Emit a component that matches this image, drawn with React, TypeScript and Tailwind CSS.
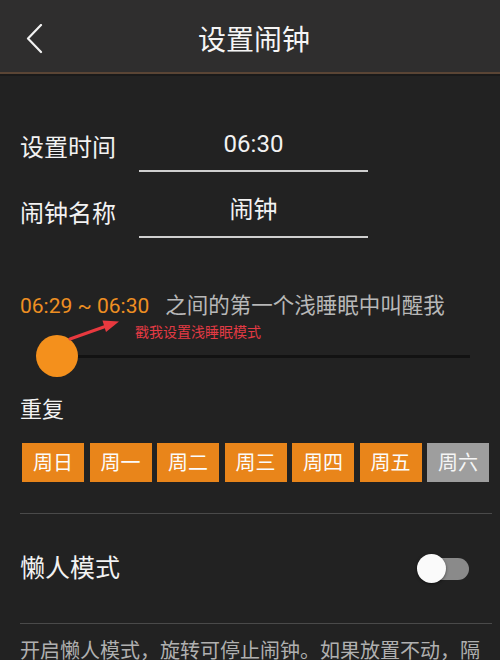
import React from "react";

const days = ["周日", "周一", "周二", "周三", "周四", "周五", "周六"];

export default function App() {
  return (
    <div
      className="relative w-[500px] h-[660px] overflow-hidden bg-[#222222] text-white"
      style={{ fontFamily: "Roboto, 'Noto Sans CJK SC', 'Noto Sans', sans-serif" }}
    >
      {/* Header */}
      <div className="relative h-[72px] bg-[#2f2e2e] flex items-center justify-center">
        <div className="absolute left-[26px] top-[24px]">
          <svg width="18" height="30" viewBox="0 0 18 30" fill="none">
            <polyline points="15,1 2,14.5 15,28" stroke="#f2f2f2" strokeWidth="2.2" strokeLinecap="round" strokeLinejoin="round" />
          </svg>
        </div>
        <div className="text-[28px] leading-[36px] mt-[10px] ml-[8px] text-[#f5f5f5]">设置闹钟</div>
      </div>
      <div className="h-[2px] bg-[#5a4535]" />
      <div className="h-[2px] bg-[#1a1a1a]" />

      {/* Body */}
      <div className="pl-[20px]">
        <div className="pt-[52px] flex items-end">
          <div className="w-[119px] text-[24px] leading-[32px] mb-[8px] text-[#f2f2f2]">设置时间</div>
          <div className="w-[229px] h-[44px] border-b-2 border-[#cfcfcf] flex items-center justify-center pb-[10px] text-[24px] leading-[32px] text-[#f2f2f2]">
            06:30
          </div>
        </div>
        <div className="mt-[22px] flex items-end">
          <div className="w-[119px] text-[24px] leading-[32px] mb-[8px] text-[#f2f2f2]">闹钟名称</div>
          <div className="w-[229px] h-[44px] border-b-2 border-[#cfcfcf] flex items-center justify-center pb-[10px] text-[24px] leading-[32px] text-[#f2f2f2]">
            闹钟
          </div>
        </div>

        <div className="mt-[54px] flex items-center leading-[28px]">
          <span className="text-[21px] text-[#ee8f22]">06:29 ~ 06:30</span>
          <span className="ml-[16px] text-[21.5px] text-[#b8b8b8]">之间的第一个浅睡眠中叫醒我</span>
        </div>

        {/* Slider */}
        <div className="mt-[15px] h-[42px] flex items-center pr-[30px]">
          <div className="w-[42px] h-[42px] ml-[16px] rounded-full bg-[#f4901c] shrink-0" />
          <div className="flex-1 h-[3px] bg-[#121212]" />
        </div>

        <div className="mt-[18px] text-[22px] leading-[30px] text-[#f2f2f2]">重复</div>

        <div className="mt-[18px] ml-[2px] flex gap-[5.5px]">
          {days.map((d, i) => (
            <div
              key={d}
              className={
                i === 6
                  ? "w-[62px] h-[39px] flex items-center justify-center bg-[#9e9e9e] text-[20px] text-[#f5f5f5]"
                  : "w-[62px] h-[39px] flex items-center justify-center bg-[#e9851a] text-[20px] text-[#fbfbfb]"
              }
            >
              {d}
            </div>
          ))}
        </div>

        <div className="mt-[31px] mr-[8px] h-[1px] bg-[#4a4a4a]" />

        <div className="h-[109px] flex items-center justify-between pr-[31px]">
          <div className="text-[25px] leading-[32px] text-[#f2f2f2]">懒人模式</div>
          <div className="relative w-[52px] h-[29px]">
            <div className="absolute left-[3px] right-0 top-[4px] h-[22px] rounded-full bg-[#8a8a8a]" />
            <div className="absolute left-0 top-0 w-[29px] h-[29px] rounded-full bg-[#fafafa] shadow-[0_1px_3px_rgba(0,0,0,0.5)]" />
          </div>
        </div>

        <div className="mr-[8px] h-[1px] bg-[#4a4a4a]" />

        <div className="mt-[12px] pr-[14px] text-[20px] leading-[30px] text-[#b0b0b0]">
          开启懒人模式，旋转可停止闹钟。如果放置不动，隔5分钟后将再次响铃。
        </div>
      </div>

      {/* Annotation overlay */}
      <div className="absolute left-[135px] top-[322px] text-[14px] leading-[20px] text-[#e23a44]">
        戳我设置浅睡眠模式
      </div>
      <svg className="absolute left-0 top-0 pointer-events-none" width="500" height="660">
        <line x1="70" y1="339" x2="108" y2="325.5" stroke="#e8393f" strokeWidth="3" strokeLinecap="round" />
        <polygon points="119,321.5 106,332 102.5,320.5" fill="#e8393f" />
      </svg>
    </div>
  );
}
